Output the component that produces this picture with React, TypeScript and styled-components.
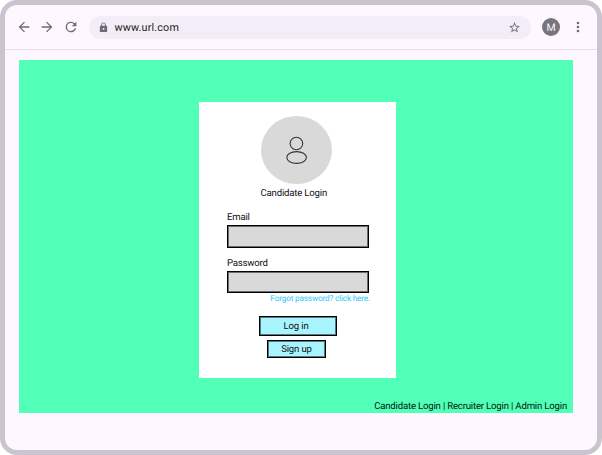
import React from "react";
import styled, { createGlobalStyle } from "styled-components";

const GlobalStyle = createGlobalStyle`
  * { box-sizing: border-box; }
  body {
    margin: 0;
    background: #fff;
    font-family: Roboto, "Liberation Sans", sans-serif;
    text-rendering: geometricPrecision;
  }
`;

const Browser = styled.div`
  display: flex;
  flex-direction: column;
  width: 602px;
  height: 455px;
  border: 5px solid #cac4d0;
  border-radius: 17px;
  background: #fef7ff;
  overflow: hidden;
`;

const Toolbar = styled.header`
  display: flex;
  align-items: center;
  flex: none;
  height: 45px;
  padding: 0.5px 8px 0 10.7px;
  border-bottom: 1px solid #e7e0ec;
`;

const NavIcons = styled.nav`
  display: flex;
  gap: 7.6px;
  width: 73.3px;
`;

const Icon = styled.svg<{ $size: number }>`
  display: block;
  flex: none;
  width: ${(p) => p.$size}px;
  height: ${(p) => p.$size}px;
  fill: #6f6a74;
`;

const AddressBar = styled.div`
  display: flex;
  align-items: center;
  width: 442px;
  height: 23px;
  padding: 0 10px 0 9.5px;
  border-radius: 12px;
  background: #f3edf7;
`;

const Address = styled.span`
  flex: 1;
  margin-left: 5px;
  padding-top: 1px;
  color: #1d1b20;
  font-size: 10.8px;
  line-height: 16px;
  letter-spacing: 0.15px;
`;

const Avatar = styled.div`
  width: 18px;
  height: 18px;
  margin: 0 10.5px 0 11px;
  border-radius: 50%;
  background: #79747e;
  color: #fef7ff;
  font-size: 10.5px;
  line-height: 19px;
  text-align: center;
`;

const Page = styled.main`
  display: flex;
  flex-direction: column;
  width: 553.5px;
  height: 353px;
  margin: 10px 0 0 14px;
  padding: 42px 5.5px 0 0;
  background: #52ffb6;
`;

const Card = styled.form`
  display: flex;
  flex-direction: column;
  width: 197px;
  height: 276px;
  margin-left: 180px;
  padding: 13.5px 27px 0 28px;
  background: #fff;
`;

const Portrait = styled.div`
  display: flex;
  width: 71px;
  height: 68px;
  margin-left: 33.5px;
  border-radius: 50%;
  background: #d9d9d9;
`;

const Person = styled.svg`
  width: 71px;
  height: 68px;
  fill: none;
  stroke: #35353a;
  stroke-width: 1.1;
`;

const Title = styled.div`
  height: 12px;
  margin: 4.5px 0 0 33.5px;
  color: #111;
  font-size: 9.6px;
  line-height: 12px;
  letter-spacing: -0.19px;
  white-space: nowrap;
`;

const Label = styled.label<{ $top: number }>`
  height: 12px;
  margin-top: ${(p) => p.$top}px;
  color: #111;
  font-size: 9.6px;
  line-height: 12px;
  letter-spacing: -0.22px;
`;

const Field = styled.input<{ $height: number }>`
  width: 142px;
  height: ${(p) => p.$height}px;
  margin: 1px 0 0;
  padding: 0 4px;
  border: 1px solid #000;
  border-radius: 0;
  box-shadow: inset 0 0 0 1px rgba(0, 0, 0, 0.5);
  background: #d9d9d9;
  outline: 0;
`;

const Forgot = styled.a`
  align-self: flex-end;
  height: 10px;
  margin: 1px -1px 0 0;
  color: #27c7fc;
  font-size: 8.2px;
  line-height: 10px;
  letter-spacing: -0.16px;
  white-space: nowrap;
`;

const Button = styled.button<{ $width: number; $height: number; $top: number; $left: number; $nudge: number }>`
  width: ${(p) => p.$width}px;
  height: ${(p) => p.$height}px;
  margin: ${(p) => p.$top}px 0 0 ${(p) => p.$left}px;
  padding: 1px ${(p) => p.$nudge}px 0 0;
  border: 1px solid #000;
  box-shadow: inset 0 0 0 1px rgba(0, 0, 0, 0.5);
  background: #a8f5ff;
  color: #111;
  font: 9.6px/12px Roboto, sans-serif;
  letter-spacing: -0.15px;
  text-rendering: geometricPrecision;
`;

const Footer = styled.footer`
  margin-top: 23px;
  color: #001a10;
  font-size: 9.6px;
  line-height: 12px;
  letter-spacing: -0.19px;
  text-align: right;
  white-space: nowrap;
`;

const paths = {
  back: "M20 11H7.83l5.59-5.59L12 4l-8 8 8 8 1.41-1.41L7.83 13H20v-2z",
  forward: "M12 4l-1.41 1.41L16.17 11H4v2h12.17l-5.58 5.59L12 20l8-8z",
  reload:
    "M17.65 6.35A7.958 7.958 0 0 0 12 4a8 8 0 1 0 7.73 10h-2.08A5.99 5.99 0 0 1 12 18a6 6 0 1 1 0-12c1.66 0 3.14.69 4.22 1.78L13 11h7V4l-2.35 2.35z",
  lock: "M18 8h-1V6A5 5 0 0 0 7 6v2H6a2 2 0 0 0-2 2v10a2 2 0 0 0 2 2h12a2 2 0 0 0 2-2V10a2 2 0 0 0-2-2zm-6 9a2 2 0 1 1 0-4 2 2 0 0 1 0 4zm3.1-9H8.9V6a3.1 3.1 0 0 1 6.2 0v2z",
  star: "M22 9.24l-7.19-.62L12 2 9.19 8.63 2 9.24l5.46 4.73L5.82 21 12 17.27 18.18 21l-1.63-7.03L22 9.24zM12 15.4l-3.76 2.27 1-4.28-3.32-2.88 4.38-.38L12 6.1l1.71 4.04 4.38.38-3.32 2.88 1 4.28L12 15.4z",
  more: "M12 8a2 2 0 1 0 0-4 2 2 0 0 0 0 4zm0 2a2 2 0 1 0 0 4 2 2 0 0 0 0-4zm0 6a2 2 0 1 0 0 4 2 2 0 0 0 0-4z",
};

const Glyph = ({ name, size }: { name: keyof typeof paths; size: number }) => (
  <Icon $size={size} viewBox="0 0 24 24" aria-hidden="true">
    <path d={paths[name]} />
  </Icon>
);

export default function App() {
  return (
    <>
      <GlobalStyle />
      <Browser>
        <Toolbar>
          <NavIcons>
            <Glyph name="back" size={16} />
            <Glyph name="forward" size={16} />
            <Glyph name="reload" size={16} />
          </NavIcons>
          <AddressBar>
            <Glyph name="lock" size={11} />
            <Address>www.url.com</Address>
            <Glyph name="star" size={13} />
          </AddressBar>
          <Avatar>M</Avatar>
          <Glyph name="more" size={16} />
        </Toolbar>
        <Page>
          <Card onSubmit={(e) => e.preventDefault()}>
            <Portrait>
              <Person viewBox="0 0 71 68">
                <circle cx="35.4" cy="27.5" r="6.3" />
                <ellipse cx="35.6" cy="41.5" rx="9.8" ry="5.9" />
              </Person>
            </Portrait>
            <Title>Candidate Login</Title>
            <Label htmlFor="email" $top={12}>Email</Label>
            <Field id="email" type="email" $height={23} />
            <Label htmlFor="password" $top={10}>Password</Label>
            <Field id="password" type="password" $height={22} />
            <Forgot>Forgot password? click here.</Forgot>
            <Button type="submit" $width={78} $height={20} $top={12} $left={32} $nudge={4}>
              Log in
            </Button>
            <Button type="button" $width={59} $height={18} $top={4} $left={40} $nudge={0}>
              Sign up
            </Button>
          </Card>
          <Footer>Candidate Login | Recruiter Login | Admin Login</Footer>
        </Page>
      </Browser>
    </>
  );
}
